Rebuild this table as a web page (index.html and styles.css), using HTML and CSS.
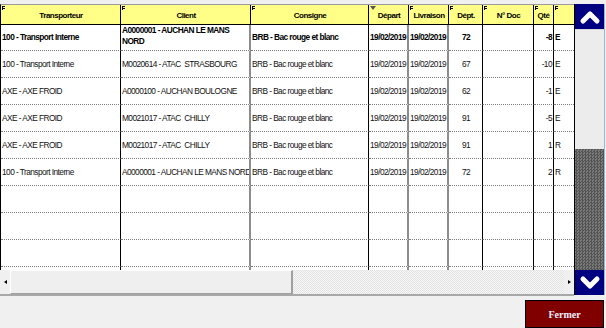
FILE: index.html
```html
<!DOCTYPE html>
<html lang="fr">
<head>
<meta charset="utf-8">
<title>Mouvements</title>
<link rel="stylesheet" href="styles.css">
</head>
<body>
<div class="frame">
  <div class="grid-area">
    <div class="table">
      <div class="row head">
        <div class="c c1"><span class="mk"></span>Transporteur</div>
        <div class="c c2"><span class="mk"></span>Client</div>
        <div class="c c3"><span class="mk"></span>Consigne</div>
        <div class="c c4"><span class="mk tri"></span>Départ</div>
        <div class="c c5"><span class="mk"></span>Livraison</div>
        <div class="c c6"><span class="mk"></span>Dépt.</div>
        <div class="c c7"><span class="mk"></span>N° Doc</div>
        <div class="c c8"><span class="mk"></span>Qté</div>
        <div class="c c9"><span class="mk"></span></div>
      </div>
      <div class="body">
        <div class="row first bold">
          <div class="c c1">100 - Transport Interne</div>
          <div class="c c2 wrap">A0000001 - AUCHAN LE MANS NORD</div>
          <div class="c c3">BRB - Bac rouge et blanc</div>
          <div class="c c4">19/02/2019</div>
          <div class="c c5">19/02/2019</div>
          <div class="c c6">72</div>
          <div class="c c7"></div>
          <div class="c c8">-8</div>
          <div class="c c9">E</div>
        </div>
        <div class="row">
          <div class="c c1">100 - Transport Interne</div>
          <div class="c c2">M0020614 - ATAC&nbsp; STRASBOURG</div>
          <div class="c c3">BRB - Bac rouge et blanc</div>
          <div class="c c4">19/02/2019</div>
          <div class="c c5">19/02/2019</div>
          <div class="c c6">67</div>
          <div class="c c7"></div>
          <div class="c c8">-10</div>
          <div class="c c9">E</div>
        </div>
        <div class="row">
          <div class="c c1">AXE - AXE FROID</div>
          <div class="c c2">A0000100 - AUCHAN BOULOGNE</div>
          <div class="c c3">BRB - Bac rouge et blanc</div>
          <div class="c c4">19/02/2019</div>
          <div class="c c5">19/02/2019</div>
          <div class="c c6">62</div>
          <div class="c c7"></div>
          <div class="c c8">-1</div>
          <div class="c c9">E</div>
        </div>
        <div class="row">
          <div class="c c1">AXE - AXE FROID</div>
          <div class="c c2">M0021017 - ATAC&nbsp; CHILLY</div>
          <div class="c c3">BRB - Bac rouge et blanc</div>
          <div class="c c4">19/02/2019</div>
          <div class="c c5">19/02/2019</div>
          <div class="c c6">91</div>
          <div class="c c7"></div>
          <div class="c c8">-5</div>
          <div class="c c9">E</div>
        </div>
        <div class="row">
          <div class="c c1">AXE - AXE FROID</div>
          <div class="c c2">M0021017 - ATAC&nbsp; CHILLY</div>
          <div class="c c3">BRB - Bac rouge et blanc</div>
          <div class="c c4">19/02/2019</div>
          <div class="c c5">19/02/2019</div>
          <div class="c c6">91</div>
          <div class="c c7"></div>
          <div class="c c8">1</div>
          <div class="c c9">R</div>
        </div>
        <div class="row">
          <div class="c c1">100 - Transport Interne</div>
          <div class="c c2">A0000001 - AUCHAN LE MANS NORD</div>
          <div class="c c3">BRB - Bac rouge et blanc</div>
          <div class="c c4">19/02/2019</div>
          <div class="c c5">19/02/2019</div>
          <div class="c c6">72</div>
          <div class="c c7"></div>
          <div class="c c8">2</div>
          <div class="c c9">R</div>
        </div>
        <div class="row"><div class="c c1"></div><div class="c c2"></div><div class="c c3"></div><div class="c c4"></div><div class="c c5"></div><div class="c c6"></div><div class="c c7"></div><div class="c c8"></div><div class="c c9"></div></div>
        <div class="row"><div class="c c1"></div><div class="c c2"></div><div class="c c3"></div><div class="c c4"></div><div class="c c5"></div><div class="c c6"></div><div class="c c7"></div><div class="c c8"></div><div class="c c9"></div></div>
        <div class="row"><div class="c c1"></div><div class="c c2"></div><div class="c c3"></div><div class="c c4"></div><div class="c c5"></div><div class="c c6"></div><div class="c c7"></div><div class="c c8"></div><div class="c c9"></div></div>
        <div class="row"><div class="c c1"></div><div class="c c2"></div><div class="c c3"></div><div class="c c4"></div><div class="c c5"></div><div class="c c6"></div><div class="c c7"></div><div class="c c8"></div><div class="c c9"></div></div>
      </div>
    </div>
    <div class="hscroll">
      <div class="hbtn"><span class="arr-l"></span></div>
      <div class="hthumb"></div>
      <div class="htrack"></div>
      <div class="hbtn"><span class="arr-r"></span></div>
    </div>
  </div>
  <div class="vscroll">
    <div class="vbtn">
      <svg width="22" height="16" viewBox="0 0 22 16"><polyline points="4,12 11,5 18,12" fill="none" stroke="#fff" stroke-width="5" stroke-linecap="round" stroke-linejoin="round"/></svg>
    </div>
    <div class="vthumb"></div>
    <div class="vtrack"></div>
    <div class="vbtn">
      <svg width="22" height="16" viewBox="0 0 22 16"><polyline points="4,4 11,11 18,4" fill="none" stroke="#fff" stroke-width="5" stroke-linecap="round" stroke-linejoin="round"/></svg>
    </div>
  </div>
</div>
<div class="footer">
  <button class="close">Fermer</button>
</div>
</body>
</html>
```

FILE: styles.css
```css
html, body {
  margin: 0;
  padding: 0;
}
body {
  background: #f0f0f0;
  width: 606px;
  height: 328px;
  overflow: hidden;
  font-family: "Liberation Sans", Arial, sans-serif;
  color: #000;
}
.frame {
  display: flex;
  margin-top: 4px;
  height: 292px;
}
.grid-area {
  width: 574px;
  display: flex;
  flex-direction: column;
}
.table {
  height: 266px;
  border-top: 1px solid #9a9a9a;
  border-left: 1px solid #000;
  background: #fff;
  display: flex;
  flex-direction: column;
  overflow: hidden;
}
.body {
  flex: 1;
  overflow: hidden;
}
.row {
  display: grid;
  grid-template-columns: 120px 130px 118px 40px 40px 34px 51px 20px 20px;
  height: 27px;
}
.row.first {
  height: 26px;
}
.c {
  box-sizing: border-box;
  border-right: 1px solid #000;
  border-bottom: 1px dotted #7c7c7c;
  font-size: 8.3px;
  letter-spacing: -0.55px;
  line-height: 11px;
  padding: 0 0 0 1px;
  display: flex;
  align-items: center;
  white-space: nowrap;
  overflow: hidden;
  color: #111;
}
.c2, .c4, .c5 {
  border-right: 2px solid #8c8c8c;
}
.c9 {
  border-right: none;
}
.c6 {
  justify-content: center;
}
.c8 {
  justify-content: flex-end;
  padding-right: 1px;
}
.bold .c {
  font-weight: bold;
  color: #000;
}
.c.wrap {
  white-space: normal;
  align-items: center;
  padding-bottom: 3px;
}
.head {
  height: 20px;
  background: #ffff88;
}
.head .c {
  position: relative;
  border-right: 1px solid #000;
  border-bottom: 1px solid #000;
  justify-content: center;
  font-weight: bold;
  font-size: 8px;
  letter-spacing: -0.5px;
  padding-top: 1px;
  color: #000;
}
.head .c9 {
  border-right: none;
}
.mk {
  position: absolute;
  left: 1px;
  top: 1px;
  width: 3px;
  height: 4px;
  border-left: 1px solid #000;
  border-top: 1px solid #000;
  box-sizing: border-box;
}
.mk::after {
  content: "";
  display: block;
  width: 2px;
  height: 1px;
  background: #000;
  margin-top: 1px;
}
.mk.tri {
  width: 0;
  height: 0;
  border-left: 3px solid transparent;
  border-right: 3px solid transparent;
  border-top: 4px solid #555;
}
.mk.tri::after {
  display: none;
}
.hscroll {
  height: 24px;
  display: flex;
  border-bottom: 2px solid #a8a8a8;
  background: #f0f0f0;
}
.hbtn {
  width: 10px;
  display: flex;
  align-items: center;
  justify-content: center;
  background: #f0f0f0;
}
.arr-l {
  width: 0;
  height: 0;
  border-top: 2px solid transparent;
  border-bottom: 2px solid transparent;
  border-right: 3px solid #000;
}
.arr-r {
  width: 0;
  height: 0;
  border-top: 2px solid transparent;
  border-bottom: 2px solid transparent;
  border-left: 3px solid #000;
}
.hthumb {
  width: 283px;
  box-sizing: border-box;
  background: #efefef;
  border-left: 1px solid #fff;
  border-top: 1px solid #fff;
  border-right: 2px solid #a0a0a0;
  border-bottom: 1px solid #a0a0a0;
}
.htrack {
  flex: 1;
  background-color: #ececec;
  background-image: repeating-conic-gradient(#e2e2e2 0 25%, #f7f7f7 0 50%);
  background-size: 2px 2px;
}
.vscroll {
  width: 29px;
  border-left: 1px solid #000;
  border-right: 1px solid #9fb6cf;
  display: flex;
  flex-direction: column;
  height: 291px;
}
.vbtn {
  height: 25px;
  background: #000080;
  display: flex;
  align-items: center;
  justify-content: center;
}
.vthumb {
  height: 120px;
  background: #ececec;
  box-sizing: border-box;
  border-top: 1px solid #d8d8d8;
}
.vtrack {
  flex: 1;
  background-color: #666;
  background-image: repeating-conic-gradient(#545454 0 25%, #7a7a7a 0 50%);
  background-size: 3px 3px;
}
.footer {
  display: flex;
  justify-content: flex-end;
  padding-top: 4px;
  padding-right: 2px;
}
.close {
  width: 79px;
  height: 28px;
  background: #800000;
  border: 1px solid #000;
  color: #f3eeff;
  font-family: "Liberation Serif", "Times New Roman", serif;
  font-weight: bold;
  font-size: 10px;
  padding: 0;
  margin: 0;
}
```
